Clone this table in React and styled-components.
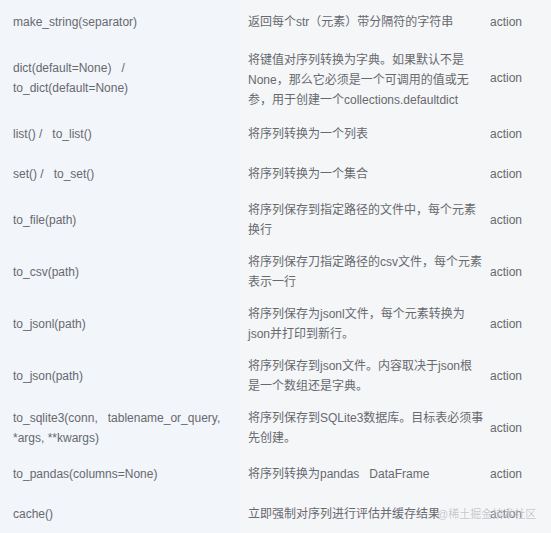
import React from 'react'
import styled, { createGlobalStyle } from 'styled-components';

const GlobalStyle = createGlobalStyle`
  html, body {
    margin: 0;
    padding: 0;
    background: #f5f6f8;
  }
  body {
    font-family: "Liberation Sans", Arial, "Noto Sans CJK SC", sans-serif;
  }
`;

const Page = styled.div`
  position: relative;
  width: 551px;
  height: 533px;
  overflow: hidden;
  background: linear-gradient(to right, #f2f5fa 0, #f2f5fa 240px, #f5f6f8 240px);
`;

const Table = styled.div`
  display: flex;
  flex-direction: column;
  padding-top: 2px;
`;

const Row = styled.div`
  display: grid;
  grid-template-columns: 240px 250px 1fr;
  min-height: 40px;
`;

const Cell = styled.div`
  display: flex;
  align-items: center;
  padding: 6px 0;
  font-size: 12px;
  line-height: 20px;
  color: #67696e;
  box-sizing: border-box;
`;

const NameCell = styled(Cell)`
  padding-left: 13px;
  padding-right: 8px;
`;

const DescCell = styled(Cell)`
  padding-left: 8px;
  padding-right: 6.5px;
  padding-top: ${({ $lines }) => ($lines === 3 ? '8px' : '6px')};
  padding-bottom: ${({ $lines }) => ($lines === 3 ? '4px' : '6px')};
`;

const TypeCell = styled(Cell)`
  padding-left: 0;
`;

const Watermark = styled.div`
  position: absolute;
  left: 437px;
  top: 506px;
  font-size: 11px;
  line-height: 16px;
  color: rgba(150, 155, 165, 0.55);
  text-shadow: 0 0 2px rgba(255, 255, 255, 0.8);
  pointer-events: none;
`;

const rows = [
  { name: 'make_string(separator)', desc: '返回每个str（元素）带分隔符的字符串' },
  {
    name: <>dict(default=None)&nbsp;&nbsp; /<br />to_dict(default=None)</>,
    desc: '将键值对序列转换为字典。如果默认不是None，那么它必须是一个可调用的值或无参，用于创建一个collections.defaultdict',
    lines: 3,
  },
  { name: <>list() /&nbsp;&nbsp; to_list()</>, desc: '将序列转换为一个列表' },
  { name: <>set() /&nbsp;&nbsp; to_set()</>, desc: '将序列转换为一个集合' },
  { name: 'to_file(path)', desc: '将序列保存到指定路径的文件中，每个元素换行' },
  { name: 'to_csv(path)', desc: '将序列保存刀指定路径的csv文件，每个元素表示一行' },
  { name: 'to_jsonl(path)', desc: '将序列保存为jsonl文件，每个元素转换为json并打印到新行。' },
  { name: 'to_json(path)', desc: '将序列保存到json文件。内容取决于json根是一个数组还是字典。' },
  { name: <>to_sqlite3(conn,&nbsp;&nbsp; tablename_or_query, *args, **kwargs)</>, desc: '将序列保存到SQLite3数据库。目标表必须事先创建。' },
  { name: 'to_pandas(columns=None)', desc: <>将序列转换为pandas&nbsp;&nbsp; DataFrame</> },
  { name: 'cache()', desc: '立即强制对序列进行评估并缓存结果' },
];

export default function App() {
  return (
    <>
      <GlobalStyle />
      <Page>
        <Table>
          {rows.map((row, i) => (
            <Row key={i}>
              <NameCell><span>{row.name}</span></NameCell>
              <DescCell $lines={row.lines}><span>{row.desc}</span></DescCell>
              <TypeCell>action</TypeCell>
            </Row>
          ))}
        </Table>
        <Watermark>@稀土掘金技术社区</Watermark>
      </Page>
    </>
  );
}
